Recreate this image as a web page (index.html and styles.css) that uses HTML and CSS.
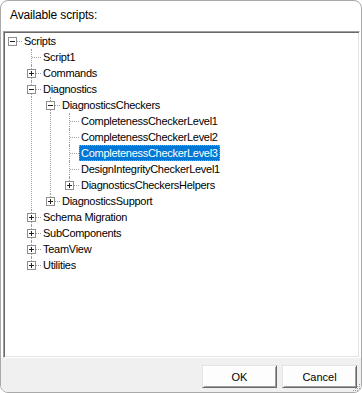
FILE: index.html
```html
<!DOCTYPE html>
<html lang="en">
<head>
    <meta charset="UTF-8">
    <meta name="viewport" content="width=device-width, initial-scale=1.0">
    <title>Available scripts</title>
    <link rel="stylesheet" href="styles.css">
</head>
<body>

    <div class="window">
        <div class="caption">Available scripts:</div>

        <!-- Script tree -->
        <div class="tree">
            <div class="row">
                <span class="j root"><svg class="box" width="9" height="9"><rect x=".5" y=".5" width="8" height="8" fill="#fff" stroke="#8e8f8f"/><path d="M2 4.5h5" stroke="#222"/></svg></span>
                <span class="lbl">Scripts</span>
            </div>
            <div class="row">
                <span class="g"></span><span class="j mid"></span>
                <span class="lbl">Script1</span>
            </div>
            <div class="row">
                <span class="g"></span><span class="j mid"><svg class="box" width="9" height="9"><rect x=".5" y=".5" width="8" height="8" fill="#fff" stroke="#8e8f8f"/><path d="M2 4.5h5M4.5 2v5" stroke="#222"/></svg></span>
                <span class="lbl">Commands</span>
            </div>
            <div class="row">
                <span class="g"></span><span class="j mid"><svg class="box" width="9" height="9"><rect x=".5" y=".5" width="8" height="8" fill="#fff" stroke="#8e8f8f"/><path d="M2 4.5h5" stroke="#222"/></svg></span>
                <span class="lbl">Diagnostics</span>
            </div>
            <div class="row">
                <span class="g"></span><span class="g line"></span><span class="j mid"><svg class="box" width="9" height="9"><rect x=".5" y=".5" width="8" height="8" fill="#fff" stroke="#8e8f8f"/><path d="M2 4.5h5" stroke="#222"/></svg></span>
                <span class="lbl">DiagnosticsCheckers</span>
            </div>
            <div class="row">
                <span class="g"></span><span class="g line"></span><span class="g line"></span><span class="j mid"></span>
                <span class="lbl">CompletenessCheckerLevel1</span>
            </div>
            <div class="row">
                <span class="g"></span><span class="g line"></span><span class="g line"></span><span class="j mid"></span>
                <span class="lbl">CompletenessCheckerLevel2</span>
            </div>
            <div class="row">
                <span class="g"></span><span class="g line"></span><span class="g line"></span><span class="j mid"></span>
                <span class="lbl selected">CompletenessCheckerLevel3</span>
            </div>
            <div class="row">
                <span class="g"></span><span class="g line"></span><span class="g line"></span><span class="j mid"></span>
                <span class="lbl">DesignIntegrityCheckerLevel1</span>
            </div>
            <div class="row">
                <span class="g"></span><span class="g line"></span><span class="g line"></span><span class="j last"><svg class="box" width="9" height="9"><rect x=".5" y=".5" width="8" height="8" fill="#fff" stroke="#8e8f8f"/><path d="M2 4.5h5M4.5 2v5" stroke="#222"/></svg></span>
                <span class="lbl">DiagnosticsCheckersHelpers</span>
            </div>
            <div class="row">
                <span class="g"></span><span class="g line"></span><span class="j last"><svg class="box" width="9" height="9"><rect x=".5" y=".5" width="8" height="8" fill="#fff" stroke="#8e8f8f"/><path d="M2 4.5h5M4.5 2v5" stroke="#222"/></svg></span>
                <span class="lbl">DiagnosticsSupport</span>
            </div>
            <div class="row">
                <span class="g"></span><span class="j mid"><svg class="box" width="9" height="9"><rect x=".5" y=".5" width="8" height="8" fill="#fff" stroke="#8e8f8f"/><path d="M2 4.5h5M4.5 2v5" stroke="#222"/></svg></span>
                <span class="lbl">Schema Migration</span>
            </div>
            <div class="row">
                <span class="g"></span><span class="j mid"><svg class="box" width="9" height="9"><rect x=".5" y=".5" width="8" height="8" fill="#fff" stroke="#8e8f8f"/><path d="M2 4.5h5M4.5 2v5" stroke="#222"/></svg></span>
                <span class="lbl">SubComponents</span>
            </div>
            <div class="row">
                <span class="g"></span><span class="j mid"><svg class="box" width="9" height="9"><rect x=".5" y=".5" width="8" height="8" fill="#fff" stroke="#8e8f8f"/><path d="M2 4.5h5M4.5 2v5" stroke="#222"/></svg></span>
                <span class="lbl">TeamView</span>
            </div>
            <div class="row">
                <span class="g"></span><span class="j last"><svg class="box" width="9" height="9"><rect x=".5" y=".5" width="8" height="8" fill="#fff" stroke="#8e8f8f"/><path d="M2 4.5h5M4.5 2v5" stroke="#222"/></svg></span>
                <span class="lbl">Utilities</span>
            </div>
        </div>

        <div class="footer">
            <button type="button">OK</button>
            <button type="button">Cancel</button>
            <svg class="grip" width="10" height="10"><path d="M8 2h1v1H8zM6 4h1v1H6zM8 4h1v1H8zM4 6h1v1H4zM6 6h1v1H6zM8 6h1v1H8zM2 8h1v1H2zM4 8h1v1H4zM6 8h1v1H6zM8 8h1v1H8z" fill="#9a9a9a"/></svg>
        </div>
    </div>

</body>
</html>
```

FILE: styles.css
```css
body {
    margin: 0;
    background: #fff;
    font-family: 'Liberation Sans', Arial, sans-serif;
    color: #000;
}

.window {
    position: relative;
    width: 362px;
    height: 393px;
    box-sizing: border-box;
    border: 1px solid #a9a9a9;
    border-radius: 8px;
    overflow: hidden;
    display: flex;
    flex-direction: column;
    background: #fff;
}

.caption {
    height: 30px;
    box-sizing: border-box;
    padding: 7px 0 0 9px;
    font-size: 12px;
    line-height: 14px;
    letter-spacing: -0.15px;
}

/* Tree view */
.tree {
    flex: 1;
    margin: 0 1px 0 2px;
    padding: 1px;
    border: 1px solid;
    border-color: #a0a0a0 #fff #fff #a0a0a0;
    box-shadow: inset 1px 1px #696969, inset -1px -1px #e3e3e3;
    font-size: 11px;
    letter-spacing: -0.28px;
}

.row {
    display: flex;
    height: 16px;
}

.g {
    width: 19px;
    height: 16px;
    flex: none;
}

.g.line {
    background: linear-gradient(#a0a0a0 50%, transparent 50%) 7px 0 / 1px 2px repeat-y;
}

.j {
    position: relative;
    width: 17px;
    height: 16px;
    flex: none;
    box-sizing: border-box;
    padding-left: 3px;
    display: flex;
    align-items: center;
}

.j::before {
    content: '';
    position: absolute;
    left: 7px;
    top: 0;
    height: 16px;
    border-left: 1px dotted #a0a0a0;
}

.j.last::before {
    height: 8px;
}

.j.root::before {
    display: none;
}

.j::after {
    content: '';
    position: absolute;
    left: 8px;
    right: 0;
    top: 8px;
    border-top: 1px dotted #a0a0a0;
}

.box {
    position: relative;
    z-index: 1;
    display: block;
}

.lbl {
    padding: 0 2px;
    line-height: 16px;
    white-space: nowrap;
}

.lbl.selected {
    background: #0078d7;
    color: #fff;
    outline: 1px dotted #e0913a;
    outline-offset: -1px;
}

/* Buttons */
.footer {
    position: relative;
    height: 34px;
    box-sizing: border-box;
    padding: 7px 4px 0 0;
    background: #f0f0f0;
    display: flex;
    justify-content: flex-end;
    align-items: flex-start;
    gap: 5px;
}

button {
    width: 75px;
    height: 23px;
    padding: 0;
    font-family: 'Liberation Sans', Arial, sans-serif;
    font-size: 11px;
    color: #000;
    background: #fdfdfd;
    border: 1px solid;
    border-color: #e3e3e3 #696969 #696969 #e3e3e3;
    box-shadow: inset 1px 1px #fff, inset -1px -1px #a0a0a0;
}

.grip {
    position: absolute;
    right: 0;
    bottom: 0;
}
```
